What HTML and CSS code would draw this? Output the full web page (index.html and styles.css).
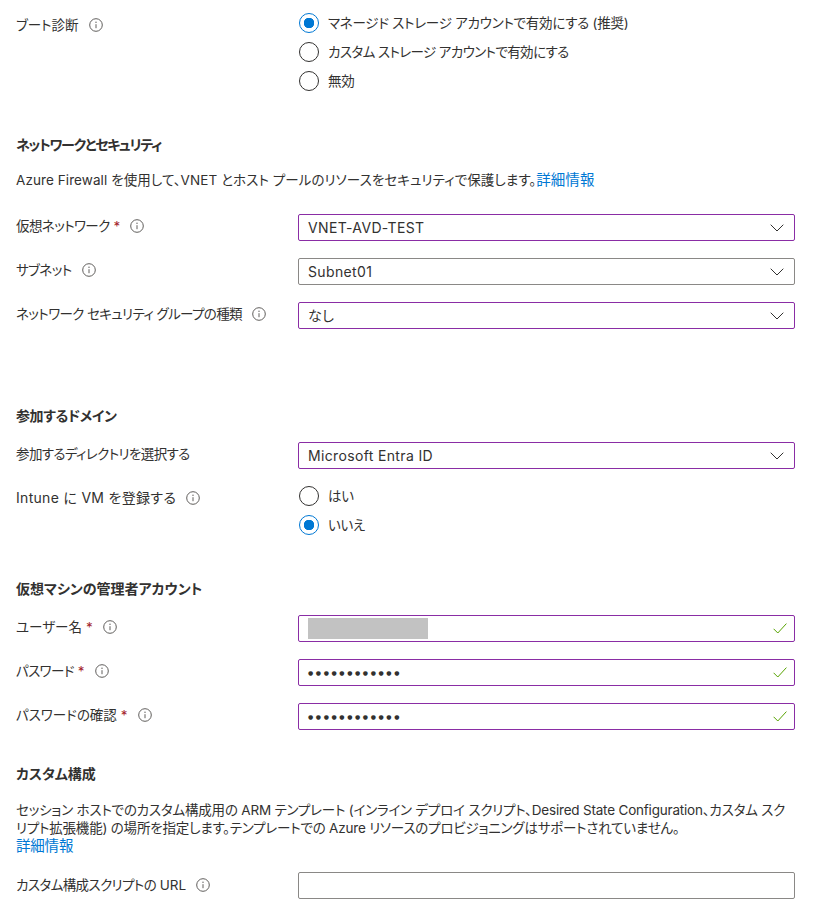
FILE: index.html
```html
<!DOCTYPE html>
<html lang="ja">
<head>
  <meta charset="UTF-8">
  <meta name="viewport" content="width=device-width, initial-scale=1.0">
  <title>仮想マシンの設定</title>
  <link rel="stylesheet" href="styles.css">
</head>
<body>
  <svg class="sprites" width="0" height="0">
    <symbol id="info" viewBox="0 0 14 14">
      <circle cx="7" cy="7" r="6.3" fill="none" stroke="#605e5c" stroke-width="1"/>
      <path d="M7 6.2v4" stroke="#605e5c" stroke-width="1" fill="none"/>
      <circle cx="7" cy="4.2" r=".7" fill="#605e5c"/>
    </symbol>
    <symbol id="chevron" viewBox="0 0 14 8">
      <path d="M.7.7 7 7l6.3-6.3" fill="none" stroke="#323130" stroke-width="1"/>
    </symbol>
    <symbol id="check" viewBox="0 0 14 11">
      <path d="M.6 5.8 4.8 10 13.4.6" fill="none" stroke="#57a300" stroke-width="1"/>
    </symbol>
  </svg>

  <div class="row row-boot">
    <div class="label">ブート診断<svg class="info"><use href="#info"/></svg></div>
    <div class="radios">
      <div class="radio-item"><span class="radio checked"></span>マネージド ストレージ アカウントで有効にする (推奨)</div>
      <div class="radio-item"><span class="radio"></span><span class="kana">カスタム ストレージ アカウントで有効にする</span></div>
      <div class="radio-item"><span class="radio"></span>無効</div>
    </div>
  </div>

  <h2 class="section-title title-network">ネットワークとセキュリティ</h2>
  <p class="desc desc-network">Azure Firewall を使用して、VNET とホスト プールのリソースをセキュリティで保護します。<a href="#">詳細情報</a></p>

  <div class="row">
    <div class="label"><span class="kana">仮想ネットワーク</span><span class="req">*</span><svg class="info"><use href="#info"/></svg></div>
    <div class="field edited">VNET-AVD-TEST<svg class="chevron"><use href="#chevron"/></svg></div>
  </div>
  <div class="row">
    <div class="label"><span class="kana">サブネット</span><svg class="info"><use href="#info"/></svg></div>
    <div class="field">Subnet01<svg class="chevron"><use href="#chevron"/></svg></div>
  </div>
  <div class="row">
    <div class="label"><span class="kana">ネットワーク セキュリティ グループの種類</span><svg class="info"><use href="#info"/></svg></div>
    <div class="field edited">なし<svg class="chevron"><use href="#chevron"/></svg></div>
  </div>

  <h2 class="section-title title-domain">参加するドメイン</h2>
  <div class="row">
    <div class="label"><span class="kana">参加するディレクトリを選択する</span></div>
    <div class="field edited">Microsoft Entra ID<svg class="chevron"><use href="#chevron"/></svg></div>
  </div>
  <div class="row row-intune">
    <div class="label label-latin">Intune に VM を登録する<svg class="info"><use href="#info"/></svg></div>
    <div class="radios">
      <div class="radio-item"><span class="radio"></span>はい</div>
      <div class="radio-item"><span class="radio checked"></span>いいえ</div>
    </div>
  </div>

  <h2 class="section-title title-admin">仮想マシンの管理者アカウント</h2>
  <div class="row">
    <div class="label">ユーザー名<span class="req">*</span><svg class="info"><use href="#info"/></svg></div>
    <div class="field edited"><span class="masked"></span><svg class="check"><use href="#check"/></svg></div>
  </div>
  <div class="row">
    <div class="label"><span class="kana">パスワード</span><span class="req">*</span><svg class="info"><use href="#info"/></svg></div>
    <div class="field edited"><span class="dots">●●●●●●●●●●●●</span><svg class="check"><use href="#check"/></svg></div>
  </div>
  <div class="row">
    <div class="label">パスワードの確認<span class="req">*</span><svg class="info"><use href="#info"/></svg></div>
    <div class="field edited"><span class="dots">●●●●●●●●●●●●</span><svg class="check"><use href="#check"/></svg></div>
  </div>

  <h2 class="section-title title-custom">カスタム構成</h2>
  <p class="desc desc-custom">セッション ホストでのカスタム構成用の ARM テンプレート (インライン デプロイ スクリプト、Desired State Configuration、カスタム スクリプト拡張機能) の場所を指定します。テンプレートでの Azure リソースのプロビジョニングはサポートされていません。<br><a href="#">詳細情報</a></p>
  <div class="row">
    <div class="label label-url"><span class="kana">カスタム構成スクリプトの</span>&nbsp;URL<svg class="info"><use href="#info"/></svg></div>
    <div class="field"></div>
  </div>
</body>
</html>
```

FILE: styles.css
```css
body {
  margin: 0;
  padding: 0 22px 0 16px;
  height: 908px;
  box-sizing: border-box;
  overflow: hidden;
  background: #fff;
  color: #323130;
  font-family: "Inter", "Noto Sans CJK JP", sans-serif;
  font-size: 14px;
  line-height: 20px;
  font-feature-settings: "palt";
}
.sprites {
  position: absolute;
}
a {
  color: #0078d4;
  font-size: 14.5px;
  text-decoration: none;
}
.row {
  display: grid;
  grid-template-columns: 282px 497px;
  margin-bottom: 17px;
}
.row-boot {
  padding-top: 13px;
  margin-bottom: 0;
}
.row-intune {
  margin-bottom: 0;
}
.label {
  display: flex;
  align-items: center;
  height: 24px;
  font-size: 13.5px;
}
.label-latin {
  font-size: 14px;
  letter-spacing: .3px;
}
.label-url {
  height: 27px;
}
.kana {
  letter-spacing: -.6px;
}
.req {
  color: #a4262c;
  margin-left: 4px;
}
.info {
  width: 14px;
  height: 14px;
  margin-left: 10px;
  flex: none;
}
.field {
  height: 27px;
  box-sizing: border-box;
  border: 1px solid #8a8886;
  border-radius: 2px;
  padding: 0 9px;
  display: flex;
  align-items: center;
  justify-content: space-between;
  letter-spacing: .35px;
}
.field.edited {
  border-color: #8a2da5;
}
.chevron {
  width: 14px;
  height: 8px;
  margin-right: 1px;
}
.check {
  width: 14px;
  height: 11px;
  margin-left: auto;
  margin-right: -2px;
}
.masked {
  width: 120px;
  height: 21px;
  background: #c2c2c2;
}
.dots {
  font-family: "DejaVu Sans", sans-serif;
  font-size: 6px;
  letter-spacing: 2.6px;
}
.radios {
  display: flex;
  flex-direction: column;
  gap: 9px;
}
.radio-item {
  display: flex;
  align-items: center;
  height: 20px;
  font-size: 13.5px;
  letter-spacing: -.25px;
}
.radio {
  width: 20px;
  height: 20px;
  box-sizing: border-box;
  border: 1px solid #323130;
  border-radius: 50%;
  margin: 0 9px 0 1px;
  flex: none;
}
.radio.checked {
  border-color: #0078d4;
  background: radial-gradient(circle, #0078d4 0 5px, transparent 5.5px);
}
.section-title {
  margin: 0;
  font-size: 14px;
  font-weight: 700;
  line-height: 20px;
}
.title-network {
  margin-top: 44px;
  letter-spacing: -1.3px;
}
.desc {
  margin: 0;
  font-size: 13.5px;
}
.desc-network {
  margin: 15px 0 24px;
  letter-spacing: .08px;
}
.title-domain {
  margin-top: 77px;
  margin-bottom: 16px;
  letter-spacing: -.4px;
}
.title-admin {
  margin-top: 44px;
  margin-bottom: 16px;
}
.title-custom {
  margin-top: 34px;
}
.desc-custom {
  margin: 18px 0 16px;
  line-height: 17.5px;
  letter-spacing: -.2px;
}
```
